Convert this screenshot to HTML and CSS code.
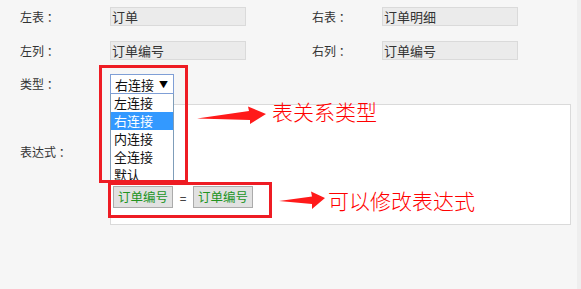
FILE: index.html
```html
<!DOCTYPE html>
<html lang="zh">
<head>
<meta charset="utf-8">
<link rel="stylesheet" href="styles.css">
</head>
<body>
<div class="page">
  <div class="row r1">
    <span class="label">左表 ：</span>
    <div class="field">订单</div>
    <span class="label right">右表 ：</span>
    <div class="field">订单明细</div>
  </div>
  <div class="row r2">
    <span class="label">左列 ：</span>
    <div class="field">订单编号</div>
    <span class="label right">右列 ：</span>
    <div class="field">订单编号</div>
  </div>
  <div class="row r3">
    <span class="label">类型 ：</span>
    <div class="select-wrap">
      <div class="select"><span>右连接</span><span class="caret">▼</span></div>
      <ul class="options">
        <li>左连接</li>
        <li class="active">右连接</li>
        <li>内连接</li>
        <li>全连接</li>
        <li>默认</li>
      </ul>
    </div>
  </div>
  <div class="row r4">
    <span class="label expr-label">表达式 ：</span>
    <div class="expr-box">
      <div class="expr">
        <span class="tok">订单编号</span>
        <span class="eq">=</span>
        <span class="tok">订单编号</span>
      </div>
    </div>
  </div>

  <div class="mark mark-type"></div>
  <div class="mark mark-expr"></div>
  <svg class="arrows" width="581" height="289" viewBox="0 0 581 289">
    <polygon points="197,118.5 249,111 248,106.5 266,114 250,124 250,120" fill="#ff1a1a"/>
    <polygon points="279,201 312,196.5 311,191.5 325,198 312,209 312,204" fill="#ff1a1a"/>
  </svg>
  <span class="note note-type">表关系类型</span>
  <span class="note note-expr">可以修改表达式</span>
</div>
</body>
</html>
```
FILE: styles.css
```css
html, body {
  margin: 0;
  padding: 0;
}
body {
  background: #f6f6f6;
  font-family: "Noto Sans CJK SC", "Microsoft YaHei", sans-serif;
  color: #333;
}
.page {
  position: relative;
  width: 581px;
  height: 289px;
  box-sizing: border-box;
  padding: 7px 0 0 20px;
  border-right: 4px solid #eeeeee;
}
.row {
  display: flex;
  align-items: center;
}
.r1 { height: 19px; }
.r2 { height: 19px; margin-top: 15px; }
.r3 { height: 20px; margin-top: 14px; }
.r4 { align-items: flex-start; margin-top: 10px; }

.label {
  width: 90px;
  font-size: 12px;
  line-height: 16px;
  color: #333;
  white-space: nowrap;
}
.label.right {
  width: 70px;
  margin-left: 66px;
}
.field {
  width: 136px;
  height: 19px;
  box-sizing: border-box;
  background: #ebebeb;
  border: 1px solid #dadada;
  font-size: 13px;
  line-height: 17px;
  padding-left: 1px;
  color: #333;
}
.select-wrap {
  position: relative;
}
.select {
  width: 64px;
  height: 20px;
  box-sizing: border-box;
  border: 1px solid #7f9fd6;
  background: #fff;
  display: flex;
  align-items: center;
  justify-content: space-between;
  padding: 0 5px 0 4px;
  font-size: 13px;
  color: #111;
}
.caret {
  font-size: 9px;
  color: #000;
}
.options {
  position: absolute;
  top: 20px;
  left: 0;
  width: 64px;
  box-sizing: border-box;
  margin: 0;
  padding: 0;
  list-style: none;
  background: #fff;
  border: 1px solid #7f9db9;
  border-top: 0;
  z-index: 2;
}
.options li {
  height: 18px;
  line-height: 18px;
  padding-left: 3px;
  font-size: 13px;
  color: #111;
}
.options li.active {
  background: #3399ff;
  color: #fff;
}
.expr-label {
  margin-top: 40px;
}
.expr-box {
  width: 461px;
  height: 121px;
  box-sizing: border-box;
  background: #fff;
  border: 1px solid #dadada;
  padding: 81px 0 0 2px;
}
.expr {
  display: flex;
  align-items: center;
}
.tok {
  width: 60px;
  height: 22px;
  box-sizing: border-box;
  border: 1px solid #ababab;
  background: #e1e1e1;
  color: #22941f;
  font-size: 12.5px;
  line-height: 20px;
  text-align: center;
}
.eq {
  width: 20px;
  text-align: center;
  font-size: 12px;
  color: #111;
}
.mark {
  position: absolute;
  border: 3px solid #ee1c24;
  box-sizing: border-box;
  z-index: 3;
}
.mark-type {
  left: 99px;
  top: 65px;
  width: 89px;
  height: 118px;
}
.mark-expr {
  left: 108px;
  top: 182px;
  width: 164px;
  height: 36px;
}
.arrows {
  position: absolute;
  left: 0;
  top: 0;
  z-index: 3;
}
.note {
  position: absolute;
  font-size: 21px;
  line-height: 24px;
  color: #ff0000;
  font-weight: 300;
  z-index: 3;
}
.note-type {
  left: 272px;
  top: 99px;
}
.note-expr {
  left: 328px;
  top: 188px;
}
```
